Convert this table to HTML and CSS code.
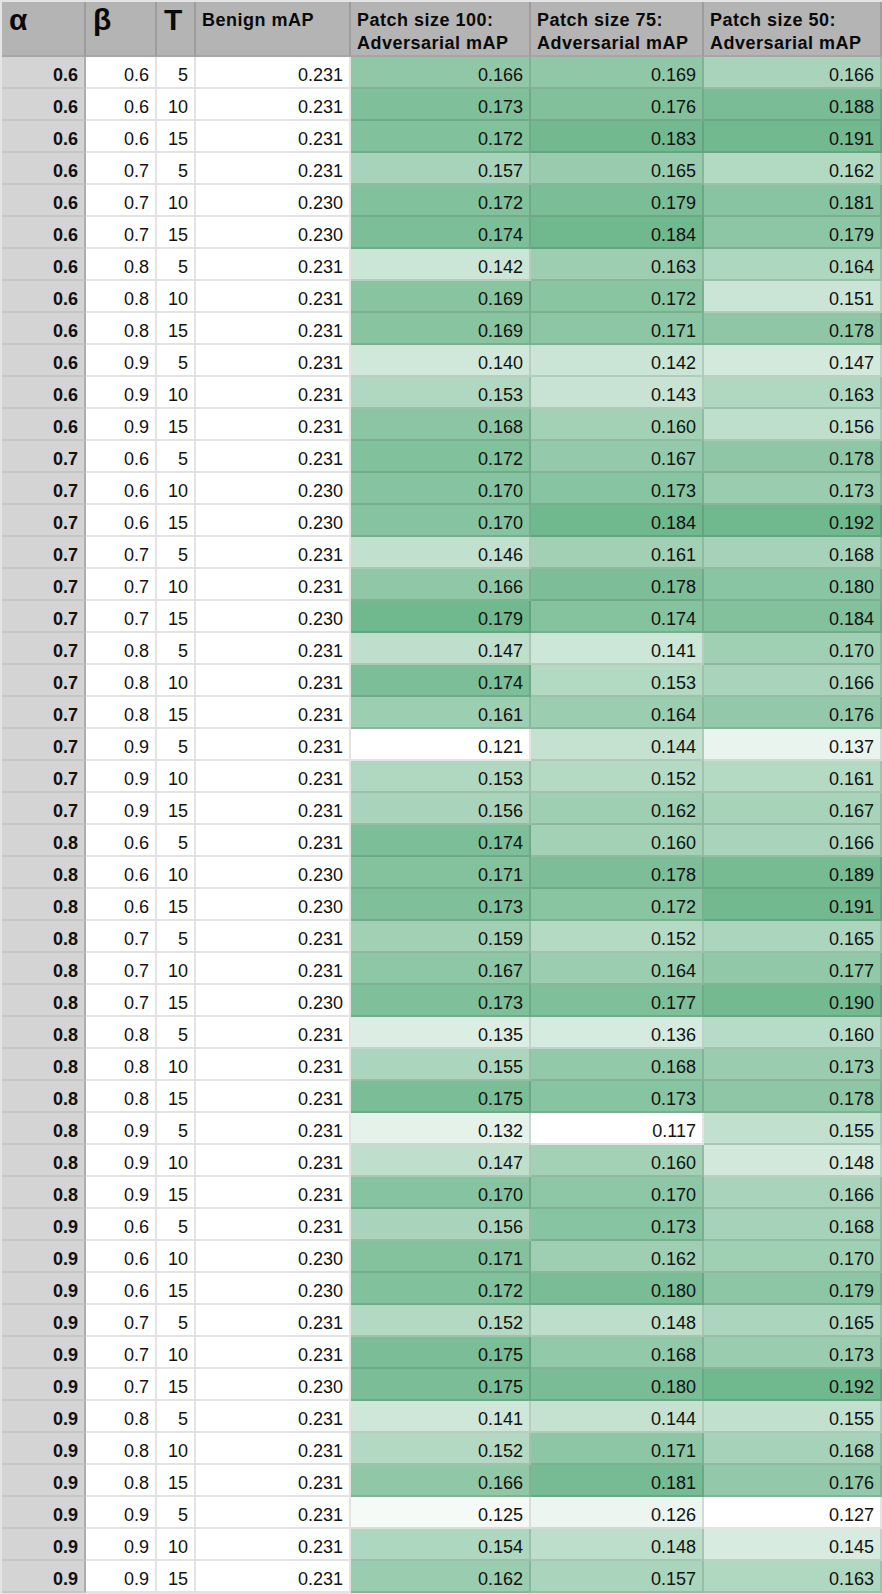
FILE: index.html
```html
<!DOCTYPE html>
<html>
<head>
<meta charset="utf-8">
<link rel="stylesheet" href="styles.css">
</head>
<body>
<table class="sheet">
<colgroup>
<col class="w-a"><col class="w-b"><col class="w-t"><col class="w-ben"><col class="w-100"><col class="w-75"><col class="w-50">
</colgroup>
<thead>
<tr>
<th class="sym">α</th><th class="sym">β</th><th class="sym">T</th><th class="txt">Benign mAP</th><th class="txt">Patch size 100:<br>Adversarial mAP</th><th class="txt">Patch size 75:<br>Adversarial mAP</th><th class="txt">Patch size 50:<br>Adversarial mAP</th>
</tr>
</thead>
<tbody>
<tr><th class="a">0.6</th><td>0.6</td><td>5</td><td>0.231</td><td class="p100" style="--v:.166">0.166</td><td class="p75" style="--v:.169">0.169</td><td class="p50" style="--v:.166">0.166</td></tr>
<tr><th class="a">0.6</th><td>0.6</td><td>10</td><td>0.231</td><td class="p100" style="--v:.173">0.173</td><td class="p75" style="--v:.176">0.176</td><td class="p50" style="--v:.188">0.188</td></tr>
<tr><th class="a">0.6</th><td>0.6</td><td>15</td><td>0.231</td><td class="p100" style="--v:.172">0.172</td><td class="p75" style="--v:.183">0.183</td><td class="p50" style="--v:.191">0.191</td></tr>
<tr><th class="a">0.6</th><td>0.7</td><td>5</td><td>0.231</td><td class="p100" style="--v:.157">0.157</td><td class="p75" style="--v:.165">0.165</td><td class="p50" style="--v:.162">0.162</td></tr>
<tr><th class="a">0.6</th><td>0.7</td><td>10</td><td>0.230</td><td class="p100" style="--v:.172">0.172</td><td class="p75" style="--v:.179">0.179</td><td class="p50" style="--v:.181">0.181</td></tr>
<tr><th class="a">0.6</th><td>0.7</td><td>15</td><td>0.230</td><td class="p100" style="--v:.174">0.174</td><td class="p75" style="--v:.184">0.184</td><td class="p50" style="--v:.179">0.179</td></tr>
<tr><th class="a">0.6</th><td>0.8</td><td>5</td><td>0.231</td><td class="p100" style="--v:.142">0.142</td><td class="p75" style="--v:.163">0.163</td><td class="p50" style="--v:.164">0.164</td></tr>
<tr><th class="a">0.6</th><td>0.8</td><td>10</td><td>0.231</td><td class="p100" style="--v:.169">0.169</td><td class="p75" style="--v:.172">0.172</td><td class="p50" style="--v:.151">0.151</td></tr>
<tr><th class="a">0.6</th><td>0.8</td><td>15</td><td>0.231</td><td class="p100" style="--v:.169">0.169</td><td class="p75" style="--v:.171">0.171</td><td class="p50" style="--v:.178">0.178</td></tr>
<tr><th class="a">0.6</th><td>0.9</td><td>5</td><td>0.231</td><td class="p100" style="--v:.140">0.140</td><td class="p75" style="--v:.142">0.142</td><td class="p50" style="--v:.147">0.147</td></tr>
<tr><th class="a">0.6</th><td>0.9</td><td>10</td><td>0.231</td><td class="p100" style="--v:.153">0.153</td><td class="p75" style="--v:.143">0.143</td><td class="p50" style="--v:.163">0.163</td></tr>
<tr><th class="a">0.6</th><td>0.9</td><td>15</td><td>0.231</td><td class="p100" style="--v:.168">0.168</td><td class="p75" style="--v:.160">0.160</td><td class="p50" style="--v:.156">0.156</td></tr>
<tr><th class="a">0.7</th><td>0.6</td><td>5</td><td>0.231</td><td class="p100" style="--v:.172">0.172</td><td class="p75" style="--v:.167">0.167</td><td class="p50" style="--v:.178">0.178</td></tr>
<tr><th class="a">0.7</th><td>0.6</td><td>10</td><td>0.230</td><td class="p100" style="--v:.170">0.170</td><td class="p75" style="--v:.173">0.173</td><td class="p50" style="--v:.173">0.173</td></tr>
<tr><th class="a">0.7</th><td>0.6</td><td>15</td><td>0.230</td><td class="p100" style="--v:.170">0.170</td><td class="p75" style="--v:.184">0.184</td><td class="p50" style="--v:.192">0.192</td></tr>
<tr><th class="a">0.7</th><td>0.7</td><td>5</td><td>0.231</td><td class="p100" style="--v:.146">0.146</td><td class="p75" style="--v:.161">0.161</td><td class="p50" style="--v:.168">0.168</td></tr>
<tr><th class="a">0.7</th><td>0.7</td><td>10</td><td>0.231</td><td class="p100" style="--v:.166">0.166</td><td class="p75" style="--v:.178">0.178</td><td class="p50" style="--v:.180">0.180</td></tr>
<tr><th class="a">0.7</th><td>0.7</td><td>15</td><td>0.230</td><td class="p100" style="--v:.179">0.179</td><td class="p75" style="--v:.174">0.174</td><td class="p50" style="--v:.184">0.184</td></tr>
<tr><th class="a">0.7</th><td>0.8</td><td>5</td><td>0.231</td><td class="p100" style="--v:.147">0.147</td><td class="p75" style="--v:.141">0.141</td><td class="p50" style="--v:.170">0.170</td></tr>
<tr><th class="a">0.7</th><td>0.8</td><td>10</td><td>0.231</td><td class="p100" style="--v:.174">0.174</td><td class="p75" style="--v:.153">0.153</td><td class="p50" style="--v:.166">0.166</td></tr>
<tr><th class="a">0.7</th><td>0.8</td><td>15</td><td>0.231</td><td class="p100" style="--v:.161">0.161</td><td class="p75" style="--v:.164">0.164</td><td class="p50" style="--v:.176">0.176</td></tr>
<tr><th class="a">0.7</th><td>0.9</td><td>5</td><td>0.231</td><td class="p100" style="--v:.121">0.121</td><td class="p75" style="--v:.144">0.144</td><td class="p50" style="--v:.137">0.137</td></tr>
<tr><th class="a">0.7</th><td>0.9</td><td>10</td><td>0.231</td><td class="p100" style="--v:.153">0.153</td><td class="p75" style="--v:.152">0.152</td><td class="p50" style="--v:.161">0.161</td></tr>
<tr><th class="a">0.7</th><td>0.9</td><td>15</td><td>0.231</td><td class="p100" style="--v:.156">0.156</td><td class="p75" style="--v:.162">0.162</td><td class="p50" style="--v:.167">0.167</td></tr>
<tr><th class="a">0.8</th><td>0.6</td><td>5</td><td>0.231</td><td class="p100" style="--v:.174">0.174</td><td class="p75" style="--v:.160">0.160</td><td class="p50" style="--v:.166">0.166</td></tr>
<tr><th class="a">0.8</th><td>0.6</td><td>10</td><td>0.230</td><td class="p100" style="--v:.171">0.171</td><td class="p75" style="--v:.178">0.178</td><td class="p50" style="--v:.189">0.189</td></tr>
<tr><th class="a">0.8</th><td>0.6</td><td>15</td><td>0.230</td><td class="p100" style="--v:.173">0.173</td><td class="p75" style="--v:.172">0.172</td><td class="p50" style="--v:.191">0.191</td></tr>
<tr><th class="a">0.8</th><td>0.7</td><td>5</td><td>0.231</td><td class="p100" style="--v:.159">0.159</td><td class="p75" style="--v:.152">0.152</td><td class="p50" style="--v:.165">0.165</td></tr>
<tr><th class="a">0.8</th><td>0.7</td><td>10</td><td>0.231</td><td class="p100" style="--v:.167">0.167</td><td class="p75" style="--v:.164">0.164</td><td class="p50" style="--v:.177">0.177</td></tr>
<tr><th class="a">0.8</th><td>0.7</td><td>15</td><td>0.230</td><td class="p100" style="--v:.173">0.173</td><td class="p75" style="--v:.177">0.177</td><td class="p50" style="--v:.190">0.190</td></tr>
<tr><th class="a">0.8</th><td>0.8</td><td>5</td><td>0.231</td><td class="p100" style="--v:.135">0.135</td><td class="p75" style="--v:.136">0.136</td><td class="p50" style="--v:.160">0.160</td></tr>
<tr><th class="a">0.8</th><td>0.8</td><td>10</td><td>0.231</td><td class="p100" style="--v:.155">0.155</td><td class="p75" style="--v:.168">0.168</td><td class="p50" style="--v:.173">0.173</td></tr>
<tr><th class="a">0.8</th><td>0.8</td><td>15</td><td>0.231</td><td class="p100" style="--v:.175">0.175</td><td class="p75" style="--v:.173">0.173</td><td class="p50" style="--v:.178">0.178</td></tr>
<tr><th class="a">0.8</th><td>0.9</td><td>5</td><td>0.231</td><td class="p100" style="--v:.132">0.132</td><td class="p75" style="--v:.117">0.117</td><td class="p50" style="--v:.155">0.155</td></tr>
<tr><th class="a">0.8</th><td>0.9</td><td>10</td><td>0.231</td><td class="p100" style="--v:.147">0.147</td><td class="p75" style="--v:.160">0.160</td><td class="p50" style="--v:.148">0.148</td></tr>
<tr><th class="a">0.8</th><td>0.9</td><td>15</td><td>0.231</td><td class="p100" style="--v:.170">0.170</td><td class="p75" style="--v:.170">0.170</td><td class="p50" style="--v:.166">0.166</td></tr>
<tr><th class="a">0.9</th><td>0.6</td><td>5</td><td>0.231</td><td class="p100" style="--v:.156">0.156</td><td class="p75" style="--v:.173">0.173</td><td class="p50" style="--v:.168">0.168</td></tr>
<tr><th class="a">0.9</th><td>0.6</td><td>10</td><td>0.230</td><td class="p100" style="--v:.171">0.171</td><td class="p75" style="--v:.162">0.162</td><td class="p50" style="--v:.170">0.170</td></tr>
<tr><th class="a">0.9</th><td>0.6</td><td>15</td><td>0.230</td><td class="p100" style="--v:.172">0.172</td><td class="p75" style="--v:.180">0.180</td><td class="p50" style="--v:.179">0.179</td></tr>
<tr><th class="a">0.9</th><td>0.7</td><td>5</td><td>0.231</td><td class="p100" style="--v:.152">0.152</td><td class="p75" style="--v:.148">0.148</td><td class="p50" style="--v:.165">0.165</td></tr>
<tr><th class="a">0.9</th><td>0.7</td><td>10</td><td>0.231</td><td class="p100" style="--v:.175">0.175</td><td class="p75" style="--v:.168">0.168</td><td class="p50" style="--v:.173">0.173</td></tr>
<tr><th class="a">0.9</th><td>0.7</td><td>15</td><td>0.230</td><td class="p100" style="--v:.175">0.175</td><td class="p75" style="--v:.180">0.180</td><td class="p50" style="--v:.192">0.192</td></tr>
<tr><th class="a">0.9</th><td>0.8</td><td>5</td><td>0.231</td><td class="p100" style="--v:.141">0.141</td><td class="p75" style="--v:.144">0.144</td><td class="p50" style="--v:.155">0.155</td></tr>
<tr><th class="a">0.9</th><td>0.8</td><td>10</td><td>0.231</td><td class="p100" style="--v:.152">0.152</td><td class="p75" style="--v:.171">0.171</td><td class="p50" style="--v:.168">0.168</td></tr>
<tr><th class="a">0.9</th><td>0.8</td><td>15</td><td>0.231</td><td class="p100" style="--v:.166">0.166</td><td class="p75" style="--v:.181">0.181</td><td class="p50" style="--v:.176">0.176</td></tr>
<tr><th class="a">0.9</th><td>0.9</td><td>5</td><td>0.231</td><td class="p100" style="--v:.125">0.125</td><td class="p75" style="--v:.126">0.126</td><td class="p50" style="--v:.127">0.127</td></tr>
<tr><th class="a">0.9</th><td>0.9</td><td>10</td><td>0.231</td><td class="p100" style="--v:.154">0.154</td><td class="p75" style="--v:.148">0.148</td><td class="p50" style="--v:.145">0.145</td></tr>
<tr><th class="a">0.9</th><td>0.9</td><td>15</td><td>0.231</td><td class="p100" style="--v:.162">0.162</td><td class="p75" style="--v:.157">0.157</td><td class="p50" style="--v:.163">0.163</td></tr>
</tbody>
</table>
</body>
</html>
```

FILE: styles.css
```css
html, body {
  margin: 0;
  background: #e4e4e4;
}
body {
  padding: 2px 0 0 2px;
  font-family: "Liberation Sans", Arial, Helvetica, sans-serif;
  color: #111;
}
.sheet {
  table-layout: fixed;
  border-collapse: separate;
  border-spacing: 0;
  width: 880px;
}
.w-a { width: 84px; }
.w-b { width: 71px; }
.w-t { width: 39px; }
.w-ben { width: 155px; }
.w-100 { width: 180px; }
.w-75 { width: 173px; }
.w-50 { width: 178px; }

.sheet th, .sheet td {
  box-sizing: border-box;
  border-right: 2px solid rgba(0, 0, 0, 0.11);
  border-bottom: 2px solid rgba(0, 0, 0, 0.11);
  white-space: nowrap;
  overflow: hidden;
}
.sheet thead th {
  height: 51px;
  background: #b4b4b4;
  color: #0a0a0a;
  text-align: left;
  vertical-align: top;
  font-weight: bold;
  border-right-color: #9d9d9d;
  border-bottom-color: #a6a6a6;
  padding: 7px 4px 0 6px;
}
.sheet thead th.txt {
  font-size: 18px;
  line-height: 23px;
  letter-spacing: 0.5px;
}
.sheet thead th.sym {
  font-size: 30px;
  line-height: 34px;
  padding-top: 1px;
  padding-left: 7px;
}
.sheet tbody td, .sheet tbody th {
  height: 32px;
  padding: 8px 6px 0 4px;
  font-size: 18px;
  line-height: 20px;
  vertical-align: top;
  text-align: right;
  background: #fff;
}
.sheet tbody th.a {
  font-weight: bold;
  background: #d4d4d4;
  border-right-color: #adadad;
  border-bottom-color: #c6c6c6;
}
.sheet tbody td.p100 { --lo: 0.121; --k: 17.241; }
.sheet tbody td.p75 { --lo: 0.117; --k: 14.925; }
.sheet tbody td.p50 { --lo: 0.127; --k: 15.385; }
.sheet tbody td.p100, .sheet tbody td.p75, .sheet tbody td.p50 {
  background: color-mix(in srgb, #70b88e calc((var(--v) - var(--lo)) * var(--k) * 100%), #ffffff);
}
```
